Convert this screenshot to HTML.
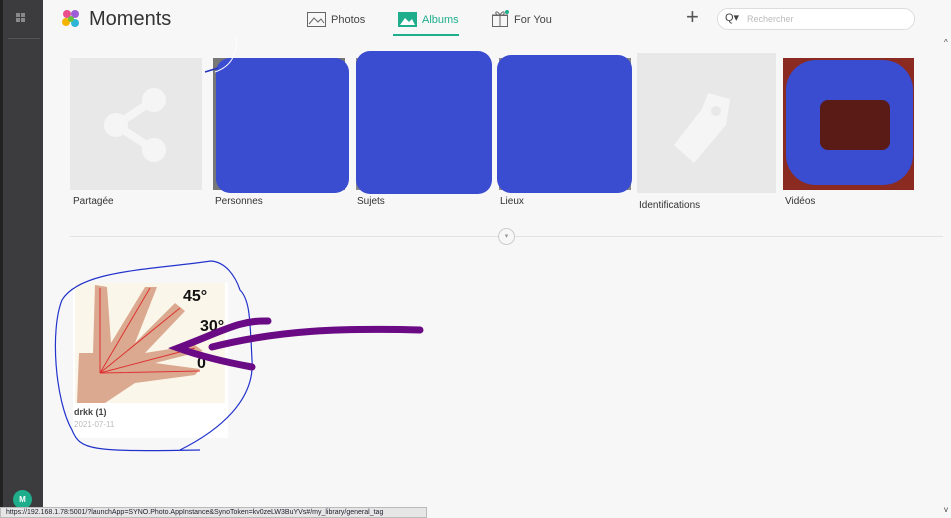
<!DOCTYPE html>
<html><head><meta charset="utf-8"><style>
*{margin:0;padding:0;box-sizing:border-box}
body{width:951px;height:518px;overflow:hidden;background:#f7f7f8;font-family:"Liberation Sans",sans-serif;position:relative}
.side{position:absolute;left:0;top:0;width:43px;height:518px;background:#3c3c3f;border-left:3px solid #222}
.abs{position:absolute}
.tile{position:absolute;background:#e8e8e9}
.lbl{position:absolute;font-size:10px;color:#333}
.blue{position:absolute;background:#3a4cd0;border-radius:14px}
</style></head><body>
<div class="side">
 <div class="abs" style="left:13px;top:13px;width:4px;height:4px;background:#888;box-shadow:5px 0 #888,0 5px #888,5px 5px #888"></div>
 <div class="abs" style="left:5px;top:38px;width:32px;height:1px;background:#555"></div>
 <div class="abs" style="left:10px;top:490px;width:19px;height:19px;border-radius:50%;background:#1fae8c;color:#fff;font-size:8px;font-weight:bold;text-align:center;line-height:19px">M</div>
</div>
<!-- header -->
<svg class="abs" style="left:61px;top:9px" width="20" height="20" viewBox="0 0 20 20"><circle cx="6" cy="5" r="4" fill="#ea4e8d"/><circle cx="14" cy="5" r="4" fill="#9d5ed6"/><circle cx="5" cy="13" r="4" fill="#f4b400"/><circle cx="14" cy="14" r="4" fill="#2fb5d8"/><circle cx="10" cy="10" r="3" fill="#68c23f"/></svg>
<div class="abs" style="left:89px;top:8px;font-size:20px;color:#333">Moments</div>
<svg class="abs" style="left:307px;top:12px" width="19" height="15"><rect x="0.5" y="0.5" width="18" height="14" fill="none" stroke="#666"/><path d="M2 12 L7 6 L11 10 L14 7 L17 11" fill="none" stroke="#666"/></svg>
<div class="abs" style="left:331px;top:14px;font-size:11px;color:#444">Photos</div>
<svg class="abs" style="left:398px;top:12px" width="19" height="15"><rect width="19" height="15" fill="#1fae8c"/><path d="M2 13 L7 6 L11 10 L14 7 L17 13Z" fill="#fff"/></svg>
<div class="abs" style="left:422px;top:14px;font-size:11px;color:#1fae8c">Albums</div>
<div class="abs" style="left:393px;top:34px;width:66px;height:2px;background:#1fae8c"></div>
<svg class="abs" style="left:491px;top:9px" width="19" height="19"><rect x="1.5" y="6.5" width="15" height="11" fill="none" stroke="#666"/><path d="M1 6h16M9 6v12M9 6 C6 1 3 3 6 6M9 6 C12 1 15 3 12 6" fill="none" stroke="#666"/><circle cx="16" cy="3" r="2" fill="#1fae8c"/></svg>
<div class="abs" style="left:514px;top:14px;font-size:11px;color:#444">For You</div>
<div class="abs" style="left:686px;top:4px;font-size:22px;color:#555">+</div>
<div class="abs" style="left:717px;top:8px;width:198px;height:22px;border:1px solid #ddd;border-radius:11px;background:#fff"></div>
<div class="abs" style="left:725px;top:11px;font-size:11px;color:#444">Q▾</div>
<div class="abs" style="left:747px;top:14px;font-size:9px;color:#bbb">Rechercher</div>
<div class="abs" style="left:944px;top:38px;font-size:8px;color:#444">^</div>
<div class="abs" style="left:944px;top:505px;font-size:8px;color:#444">v</div>
<!-- tiles -->
<div class="tile" style="left:70px;top:58px;width:132px;height:132px"></div>
<svg class="abs" style="left:102px;top:88px" width="70" height="74"><g fill="#f5f5f5"><circle cx="52" cy="12" r="12"/><circle cx="14" cy="37" r="12"/><circle cx="52" cy="62" r="12"/><path d="M14 37 L52 12 M14 37 L52 62" stroke="#f5f5f5" stroke-width="8"/></g></svg>
<div class="tile" style="left:213px;top:58px;width:132px;height:132px;background:#777"></div>
<div class="tile" style="left:356px;top:58px;width:132px;height:132px;background:#888"></div>
<div class="tile" style="left:499px;top:58px;width:132px;height:132px;background:#888"></div>
<div class="tile" style="left:637px;top:53px;width:139px;height:140px"></div>
<svg class="abs" style="left:668px;top:85px" width="70" height="80"><path d="M40 8 L62 14 L58 40 L26 78 L6 60 L34 24Z" fill="#f5f5f5"/><circle cx="48" cy="26" r="5" fill="#e8e8e9"/></svg>
<div class="tile" style="left:783px;top:58px;width:131px;height:132px;background:#8a2a20"></div>
<div class="blue" style="left:216px;top:58px;width:133px;height:135px"></div>
<div class="blue" style="left:356px;top:51px;width:136px;height:143px"></div>
<div class="blue" style="left:497px;top:55px;width:135px;height:138px"></div>
<div class="blue" style="left:786px;top:60px;width:127px;height:125px;border-radius:30px"></div>
<div class="abs" style="left:820px;top:100px;width:70px;height:50px;background:#5a1a15;border-radius:8px"></div>
<div class="lbl" style="left:73px;top:196px">Partagée</div>
<div class="lbl" style="left:215px;top:196px">Personnes</div>
<div class="lbl" style="left:357px;top:196px">Sujets</div>
<div class="lbl" style="left:500px;top:196px">Lieux</div>
<div class="lbl" style="left:639px;top:200px">Identifications</div>
<div class="lbl" style="left:785px;top:196px">Vidéos</div>
<div class="abs" style="left:70px;top:236px;width:873px;height:1px;background:#e2e2e2"></div>
<div class="abs" style="left:498px;top:228px;width:17px;height:17px;border-radius:50%;border:1px solid #ccc;background:#f7f7f8;font-size:7px;color:#999;text-align:center;line-height:15px">▾</div>
<!-- card -->
<div class="abs" style="left:73px;top:283px;width:155px;height:155px;background:#fff"></div>
<div class="abs" style="left:75px;top:283px;width:150px;height:120px;background:#fbf6ea"></div>
<svg class="abs" style="left:75px;top:283px" width="150" height="120"><path d="M2 120 L4 70 L18 70 L20 2 L32 4 L36 60 L70 4 L82 4 L60 60 L100 20 L110 28 L70 70 L120 62 L128 68 L80 80 L125 86 L120 92 L60 100 L30 120Z" fill="#dba98f"/><g stroke="#d33" stroke-width="1"><path d="M25 90 L25 5 M25 90 L75 5 M25 90 L105 25 M25 90 L120 65 M25 90 L125 88"/></g><text x="108" y="18" font-size="16" font-weight="bold" fill="#111">45°</text><text x="125" y="48" font-size="16" font-weight="bold" fill="#111">30°</text><text x="122" y="85" font-size="16" font-weight="bold" fill="#111">0</text></svg>
<div class="abs" style="left:74px;top:407px;font-size:9px;font-weight:bold;color:#444">drkk (1)</div>
<div class="abs" style="left:74px;top:420px;font-size:8px;color:#bbb">2021-07-11</div>
<!-- annotations -->
<svg class="abs" style="left:0;top:0" width="951" height="518"><path d="M237 38 C236 55 232 66 215 72" fill="none" stroke="#fff" stroke-width="1"/><path d="M205 72 L218 68" stroke="#23b" stroke-width="1.5"/>
<path d="M211 261 C150 270 80 270 62 300 C50 330 55 400 72 430 C80 450 90 452 200 450 M180 450 C220 430 255 400 252 360 C250 320 250 300 240 290 C235 275 225 262 211 261" fill="none" stroke="#2233cc" stroke-width="1.2"/>
<path d="M268 321 C240 320 225 330 178 348 C200 356 230 363 252 367 M178 348 M212 347 C280 330 340 328 420 330" fill="none" stroke="#6a0a85" stroke-width="7" stroke-linecap="round"/></svg>
<div class="abs" style="left:0;top:507px;width:427px;height:11px;background:#e6e6e6;border:1px solid #bbb;font-size:7px;color:#223;padding-left:5px;line-height:10px;white-space:nowrap;overflow:hidden">https://192.168.1.78:5001/?launchApp=SYNO.Photo.AppInstance&amp;SynoToken=kv0zeLW3BuYVs#/my_library/general_tag</div>
</body></html>
